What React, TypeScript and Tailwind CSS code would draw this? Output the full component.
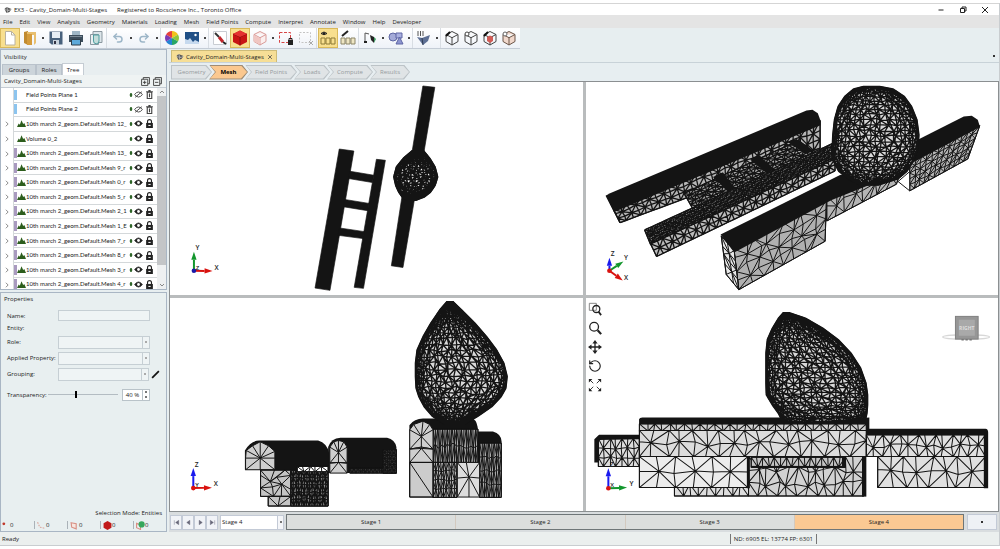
import { useState, type ReactNode } from "react";
import { RotateCcw, Undo2, Redo2 } from "lucide-react";
import clsx from "clsx";

type Point = [number, number];

/* ---------- mesh drawing ---------- */

// Small deterministic generator so the meshes look the same on every render
const createRandom = (seed: number) => {
  let s = seed;
  return () => {
    s = (s * 16807) % 2147483647;
    return s / 2147483647;
  };
};

const gridToPath = (grid: Point[][]) => {
  let d = "";
  for (let r = 0; r < grid.length; r++) {
    d += "M" + grid[r].map((p) => `${p[0].toFixed(1)} ${p[1].toFixed(1)}`).join("L");
  }
  for (let r = 0; r < grid.length - 1; r++) {
    for (let c = 0; c < grid[r].length; c++) {
      const a = grid[r][c];
      const b = grid[r + 1][c];
      d += `M${a[0].toFixed(1)} ${a[1].toFixed(1)}L${b[0].toFixed(1)} ${b[1].toFixed(1)}`;
      if (c < grid[r].length - 1) {
        const flip = (r + c) % 2 === 0;
        const p = flip ? a : grid[r][c + 1];
        const q = flip ? grid[r + 1][c + 1] : b;
        d += `M${p[0].toFixed(1)} ${p[1].toFixed(1)}L${q[0].toFixed(1)} ${q[1].toFixed(1)}`;
      }
    }
  }
  return d;
};

interface PatchProps {
  corners: [Point, Point, Point, Point];
  cols: number;
  rows: number;
  fill?: string;
  weight?: number;
  jitter?: number;
}

// Four-sided face split into triangles. Corners run clockwise from top left.
const Patch = ({ corners, cols, rows, fill = "#d4d4d4", weight = 3, jitter = 0.3 }: PatchProps) => {
  const [a, b, c, d] = corners;
  const rnd = createRandom(Math.round(a[0] * 7 + a[1] * 13 + cols * 31 + rows));
  const grid: Point[][] = [];
  for (let r = 0; r <= rows; r++) {
    const line: Point[] = [];
    for (let k = 0; k <= cols; k++) {
      const du = (rnd() - 0.5) * jitter;
      const dv = (rnd() - 0.5) * jitter;
      const u = k === 0 || k === cols ? k / cols : (k + du) / cols;
      const v = r === 0 || r === rows ? r / rows : (r + dv) / rows;
      line.push([
        (a[0] * (1 - u) + b[0] * u) * (1 - v) + (d[0] * (1 - u) + c[0] * u) * v,
        (a[1] * (1 - u) + b[1] * u) * (1 - v) + (d[1] * (1 - u) + c[1] * u) * v,
      ]);
    }
    grid.push(line);
  }
  return (
    <g strokeLinejoin="round">
      <polygon points={corners.join(" ")} fill={fill} stroke="#141414" strokeWidth={3} />
      <path d={gridToPath(grid)} fill="none" stroke="#141414" strokeWidth={weight} />
    </g>
  );
};

const box = (x1: number, y1: number, x2: number, y2: number): [Point, Point, Point, Point] => [
  [x1, y1],
  [x2, y1],
  [x2, y2],
  [x1, y2],
];

interface CavityProps {
  // y, left edge, right edge
  profile: [number, number, number][];
  cols: number;
  rows: number;
  weight?: number;
  fill?: string;
}

const Cavity = ({ profile, cols, rows, weight = 3, fill = "#d9d9d9" }: CavityProps) => {
  const rnd = createRandom(profile[0][0] * 17 + cols);
  const top = profile[0][0];
  const bottom = profile[profile.length - 1][0];
  const edgesAt = (y: number) => {
    const i = Math.max(1, profile.findIndex((p) => p[0] >= y));
    const [y0, l0, r0] = profile[i - 1];
    const [y1, l1, r1] = profile[i];
    const t = (y - y0) / (y1 - y0);
    return [l0 + (l1 - l0) * t, r0 + (r1 - r0) * t];
  };
  const grid: Point[][] = [];
  for (let r = 0; r <= rows; r++) {
    const v = (1 - Math.cos((Math.PI * r) / rows)) / 2;
    const base = top + (bottom - top) * (v * 0.6 + (r / rows) * 0.4);
    const line: Point[] = [];
    for (let k = 0; k <= cols; k++) {
      const inner = k > 0 && k < cols && r > 0 && r < rows;
      const y = inner ? base + (rnd() - 0.5) * ((bottom - top) / rows) * 0.6 : base;
      const [l, rgt] = edgesAt(y);
      const kk = inner ? k + (rnd() - 0.5) * 0.8 : k;
      const x = (l + rgt) / 2 + ((rgt - l) / 2) * Math.sin((kk / cols - 0.5) * Math.PI);
      line.push([x, y]);
    }
    grid.push(line);
  }
  const outline = [
    ...profile.map(([y, l]) => `${l},${y}`),
    ...[...profile].reverse().map(([y, , r]) => `${r},${y}`),
  ].join(" ");
  return (
    <g strokeLinejoin="round">
      <polygon points={outline} fill={fill} stroke="#141414" strokeWidth={6} />
      <path d={gridToPath(grid)} fill="none" stroke="#141414" strokeWidth={weight} />
    </g>
  );
};

// Arched face with edges running out from one point
const Fan = ({ points, center, fill = "#cfcfcf" }: { points: Point[]; center: Point; fill?: string }) => (
  <g stroke="#141414" strokeWidth={3} strokeLinejoin="round">
    <polygon points={points.join(" ")} fill={fill} />
    <path d={points.map((p) => `M${center.join(" ")}L${p.join(" ")}`).join("")} />
  </g>
);

interface Axis {
  label: string;
  color: string;
  tip: Point;
  text: Point;
}

const Triad = ({ axes, hub, third }: { axes: Axis[]; hub: string; third?: string }) => (
  <g>
    {axes.map(({ label, color, tip, text }) => {
      const [dx, dy] = [tip[0] - 70, tip[1] - 575];
      const len = Math.hypot(dx, dy);
      const [ux, uy] = [dx / len, dy / len];
      const bx = tip[0] - ux * 24;
      const by = tip[1] - uy * 24;
      return (
        <g key={label}>
          <line x1={70} y1={575} x2={bx} y2={by} stroke={color} strokeWidth={6} />
          <polygon
            fill={color}
            points={`${tip[0]},${tip[1]} ${bx - uy * 8},${by + ux * 8} ${bx + uy * 8},${by - ux * 8}`}
          />
          <text x={text[0]} y={text[1]} fontSize={20} fontWeight={600} fill="#222" textAnchor="middle">
            {label}
          </text>
        </g>
      );
    })}
    <circle cx={70} cy={575} r={7} fill={hub} />
    {third && (
      <text x={81} y={572} fontSize={18} fontWeight={600} fill="#222" textAnchor="middle">
        {third}
      </text>
    )}
  </g>
);

const RED = "#d9120f";
const GREEN = "#12962c";
const BLUE = "#1a1aee";

const TopView = () => (
  <svg viewBox="0 6 1239 642" className="block h-full w-full" role="img" aria-label="Top view">
    <g fill="#141414" stroke="#141414" strokeWidth={2} strokeLinejoin="round">
      <polygon points="508,208 552,214 480,634 435,627" />
      <polygon points="620,239 647,242 581,628 553,625" />
      <polygon points="540,275 612,287 608,309 536,297" />
      <polygon points="524,360 598,372 594,394 520,382" />
      <polygon points="509,446 584,457 580,478 504,468" />
      <polygon points="760,18 796,22 762,225 727,219" />
      <polygon points="698,345 736,352 700,565 665,560" />
    </g>
    <Cavity
      fill="#fff"
      profile={[
        [214, 728, 762],
        [236, 702, 780],
        [262, 681, 796],
        [292, 673, 804],
        [318, 679, 796],
        [338, 688, 782],
        [352, 698, 764],
        [362, 712, 738],
      ]}
      cols={16}
      rows={16}
      weight={5}
    />
    <Triad
      hub="#1a1aa8"
      third="Z"
      axes={[
        { label: "Y", color: GREEN, tip: [70, 518], text: [81, 513] },
        { label: "X", color: RED, tip: [126, 576], text: [138, 573] },
      ]}
    />
  </svg>
);

const PerspectiveView = () => (
  <svg viewBox="3 6 1236 642" className="block h-full w-full" role="img" aria-label="Perspective view">
    <Patch corners={[[82, 390], [705, 122], [705, 205], [102, 430]]} cols={30} rows={3} fill="#b5b5b5" weight={4} />
    <polygon
      points="60,348 70,342 664,92 682,90 698,100 706,122 706,136 84,398"
      fill="#141414"
    />
    <polygon points="60,348 84,394 102,430" fill="#9a9a9a" stroke="#141414" strokeWidth={4} />
    <Patch corners={[[295, 342], [640, 182], [690, 222], [320, 386]]} cols={24} rows={5} fill="#aaa" weight={4} />
    <polygon points="382,292 412,278 448,326 428,336" fill="#141414" />
    <polygon points="494,240 520,226 566,268 546,282" fill="#141414" />
    <polygon points="606,186 634,178 684,212 660,222" fill="#141414" />
    <Patch corners={[[176, 452], [750, 188], [750, 240], [194, 496]]} cols={54} rows={6} fill="#aaa" weight={4} />
    <Patch corners={[[194, 494], [750, 238], [750, 274], [212, 532]]} cols={30} rows={2} fill="#bbb" weight={4} />

    <Patch corners={[[725, 350], [960, 240], [935, 314], [725, 425]]} cols={8} rows={2} fill="#b5b5b5" jitter={0.5} />
    <Patch corners={[[445, 510], [724, 362], [720, 486], [460, 632]]} cols={8} rows={4} fill="#b0b0b0" jitter={0.7} />
    <Patch corners={[[407, 470], [446, 514], [460, 632], [422, 586]]} cols={2} rows={4} fill="#e8e8e8" />
    <polygon points="405,466 765,286 960,240 955,276 740,362 720,372 446,520" fill="#141414" />
    <Patch corners={[[975, 248], [1186, 138], [1150, 238], [975, 334]]} cols={12} rows={5} fill="#b5b5b5" />
    <polygon points="940,306 975,276 975,334" fill="#fff" stroke="#141414" strokeWidth={3} />
    <polygon points="980,190 1138,110 1162,108 1180,120 1187,142 975,254" fill="#141414" />
    <Cavity
      profile={[
        [20, 836, 884],
        [28, 806, 925],
        [50, 780, 958],
        [80, 760, 980],
        [120, 749, 996],
        [165, 744, 1002],
        [210, 742, 999],
        [245, 746, 985],
        [275, 762, 966],
        [297, 790, 940],
        [316, 826, 880],
      ]}
      cols={24}
      rows={24}
      weight={4}
    />
    <Triad
      hub={RED}
      axes={[
        { label: "Z", color: BLUE, tip: [70, 536], text: [80, 530] },
        { label: "Y", color: GREEN, tip: [112, 547], text: [120, 544] },
        { label: "X", color: RED, tip: [110, 604], text: [120, 602] },
      ]}
    />
  </svg>
);

const FrontView = () => (
  <svg viewBox="0 6 1239 636" className="block h-full w-full" role="img" aria-label="Front view">
    <path d="M225 520V462Q242 433 268 432H445Q472 440 478 470V530H316V520Z" fill="#141414" />
    <path d="M475 530V452Q484 425 512 424H652Q676 430 680 452V530Z" fill="#141414" />
    <Patch corners={box(540, 516, 680, 530)} cols={22} rows={1} fill="#444" />
    <Patch corners={box(640, 460, 680, 530)} cols={6} rows={8} fill="#444" />
    <Fan
      center={[271, 485]}
      points={[[227, 520], [227, 485], [229, 462], [248, 448], [271, 436], [296, 448], [315, 465], [315, 485], [315, 520], [271, 520]]}
    />
    <Fan
      center={[506, 468]}
      points={[[480, 500], [480, 452], [492, 436], [506, 432], [522, 436], [532, 452], [532, 500], [506, 498]]}
    />
    <Fan center={[506, 498]} points={[[480, 500], [506, 498], [532, 500], [532, 530], [480, 530]]} />
    <Patch corners={box(272, 521, 363, 600)} cols={3} rows={3} fill="#c4c4c4" jitter={0.9} />
    <Patch corners={box(295, 600, 363, 629)} cols={2} rows={1} fill="#c4c4c4" />
    <Patch corners={box(363, 522, 475, 629)} cols={14} rows={5} fill="#8f8f8f" weight={4} />
    <Patch corners={box(382, 510, 475, 526)} cols={5} rows={1} fill="#fff" />

    <path d="M719 602V386Q734 366 760 366H910Q925 376 925 405H970Q995 412 996 435V602Z" fill="#141414" />
    <Patch corners={box(790, 398, 925, 498)} cols={19} rows={2} fill="#aaa" />
    <Patch corners={box(790, 498, 862, 603)} cols={9} rows={4} fill="#b5b5b5" />
    <Patch corners={box(930, 440, 995, 603)} cols={9} rows={4} fill="#aaa" />
    <Fan
      center={[755, 420]}
      points={[[720, 458], [720, 400], [732, 384], [760, 374], [780, 384], [790, 400], [790, 458], [755, 452]]}
    />
    <Fan center={[755, 456]} points={[[720, 458], [755, 452], [790, 458], [790, 498], [720, 498]]} />
    <Patch corners={box(720, 498, 790, 602)} cols={1} rows={1} fill="#ccc" />
    <Fan
      center={[898, 542]}
      fill="#ddd"
      points={[[863, 498], [890, 498], [930, 498], [930, 545], [930, 602], [898, 602], [863, 602], [863, 545]]}
    />
    <Cavity
      profile={[
        [16, 832, 850],
        [40, 811, 875],
        [80, 784, 915],
        [120, 761, 950],
        [160, 743, 980],
        [200, 738, 1002],
        [240, 738, 1012],
        [275, 740, 1008],
        [300, 748, 994],
        [330, 764, 966],
        [358, 788, 925],
        [382, 824, 885],
      ]}
      cols={26}
      rows={26}
      weight={4}
    />
    <Triad
      hub={RED}
      third="Y"
      axes={[
        { label: "Z", color: BLUE, tip: [70, 515], text: [80, 511] },
        { label: "X", color: RED, tip: [126, 574], text: [138, 569] },
      ]}
    />
  </svg>
);

const RightView = () => (
  <svg viewBox="3 6 1236 636" className="block h-full w-full" role="img" aria-label="Right view">
    <Patch corners={box(40, 426, 163, 510)} cols={7} rows={3} fill="#ddd" />
    <polygon points="28,428 42,415 163,415 163,428 42,430 42,498 28,498" fill="#141414" />
    <Patch corners={box(268, 562, 490, 598)} cols={9} rows={1} fill="#ddd" />
    <Patch corners={box(490, 480, 835, 598)} cols={12} rows={3} fill="#d2d2d2" jitter={0.6} />
    <Patch corners={box(498, 482, 780, 512)} cols={16} rows={1} fill="#c4c4c4" />
    <rect x={498} y={508} width={284} height={5} fill="#141414" />
    <rect x={770} y={480} width={12} height={32} fill="#141414" />
    <rect x={830} y={480} width={13} height={120} fill="#141414" />
    <Patch corners={box(163, 480, 488, 573)} cols={6} rows={2} fill="#ececec" jitter={0.2} />
    <rect x={485} y={480} width={9} height={95} fill="#141414" />
    <Patch corners={box(163, 382, 843, 404)} cols={30} rows={1} fill="#cfcfcf" />
    <Patch corners={box(163, 402, 843, 480)} cols={17} rows={2} fill="#dcdcdc" jitter={0.5} />
    <Patch corners={box(843, 415, 1200, 480)} cols={14} rows={2} fill="#e0e0e0" jitter={0.5} />
    <Patch corners={box(877, 480, 1200, 573)} cols={8} rows={2} fill="#e0e0e0" jitter={0.5} />
    <Cavity
      profile={[
        [50, 594, 612],
        [66, 580, 660],
        [96, 562, 712],
        [130, 547, 758],
        [170, 543, 796],
        [215, 543, 825],
        [260, 543, 841],
        [295, 544, 846],
        [325, 562, 846],
        [350, 580, 844],
        [378, 594, 838],
      ]}
      cols={26}
      rows={28}
      weight={4}
    />
    <path d="M162 368Q163 363 172 363H590L610 378L700 374L852 363V402H843V383H162Z" fill="#141414" />
    <path d="M843 397H1200Q1208 398 1208 408V575H1195V416H843Z" fill="#141414" />
    <g>
      <ellipse cx={1142} cy={122} rx={70} ry={7} fill="none" stroke="#d8d8d8" strokeWidth={4} />
      <rect x={1110} y={60} width={68} height={68} fill="#969696" stroke="#808080" strokeWidth={3} />
      <rect x={1120} y={70} width={48} height={48} fill="#a9a9a9" />
      <text x={1144} y={100} fontSize={15} fontWeight={700} fill="#dedede" textAnchor="middle">
        RIGHT
      </text>
      <path d="M1128 130h32" stroke="#777" strokeWidth={5} strokeDasharray="7 5" />
    </g>
    <Triad
      hub={RED}
      third="X"
      axes={[
        { label: "Z", color: BLUE, tip: [70, 515], text: [80, 511] },
        { label: "Y", color: GREEN, tip: [126, 573], text: [139, 567] },
      ]}
    />
  </svg>
);

/* ---------- icons ---------- */

const Icon = ({ children, className = "size-4" }: { children: ReactNode; className?: string }) => (
  <svg viewBox="0 0 16 16" fill="none" className={className} aria-hidden="true">
    {children}
  </svg>
);

const AppIcon = () => (
  <Icon className="size-2 shrink-0">
    <path d="M1 6l4-4 10 4-4 6-6 2z" fill="#555" />
    <path d="M1 7l9 2 5-3M5 2l3 6-2 6" stroke="#eee" />
  </Icon>
);

const Cube = ({ color = "#444", fill = "none" }: { color?: string; fill?: string }) => (
  <path
    d="M8 1.500l6 3v7l-6 3.500-6-3.500v-7zM2 4.500l6 3.200 6-3.200M8 7.700V15"
    stroke={color}
    fill={fill}
    strokeLinejoin="round"
  />
);

const icons = {
  new: (
    <Icon>
      <path d="M3.500 1.500h6l3.500 3.500v10h-9.500z" fill="#fff" stroke="#b9b2a0" />
      <path d="M9.500 1.500V5H13" stroke="#b9b2a0" />
    </Icon>
  ),
  open: (
    <Icon>
      <path d="M2 2l4-1v14l-4-2z" fill="#c08a30" />
      <path d="M5 2h9v11l-2 2V5H5z" fill="#e8bf70" />
      <path d="M5 4h5v11H5z" fill="#d49b3c" />
    </Icon>
  ),
  save: (
    <Icon>
      <path d="M1.500 1.500h13v13h-11l-2-2z" fill="#48617c" />
      <path d="M4 2h8v6H4z" fill="#e6edf4" />
      <path d="M5 10h6v5H5z" fill="#c8d2dc" />
      <path d="M6 11h2v3H6z" fill="#334" />
    </Icon>
  ),
  print: (
    <Icon>
      <path d="M4 1h8v5H4z" fill="#9fb6c6" />
      <path d="M1 5h14v7H1z" fill="#3c4d5c" />
      <path d="M3.500 9.500h9v5.500h-9z" fill="#5da9da" stroke="#2f3d49" />
      <path d="M2 6.500h12" stroke="#7c8b97" />
    </Icon>
  ),
  copy: (
    <Icon>
      <path d="M5 1.500h9v11H5z" fill="#dce5ea" stroke="#8a979f" />
      <path d="M2.500 4.500h8v10h-8z" fill="#e9eff2" stroke="#8a979f" />
      <path d="M5.500 5h5.500v6a2.500 2.500 0 01-5.500 0z" fill="#c4dcda" stroke="#4f9ea0" />
    </Icon>
  ),
  undo: <Undo2 className="size-3 text-[#9db6c8]" strokeWidth={3} />,
  redo: <Redo2 className="size-3 text-[#9db6c8]" strokeWidth={3} />,
  wheel: (
    <Icon>
      <path d="M8 8V1a7 7 0 016 3.500z" fill="#f2c21b" />
      <path d="M8 8l6-3.500a7 7 0 010 7z" fill="#8ec63a" />
      <path d="M8 8l6 3.500A7 7 0 018 15z" fill="#27a567" />
      <path d="M8 8v7a7 7 0 01-6-3.500z" fill="#2483d4" />
      <path d="M8 8l-6 3.500a7 7 0 010-7z" fill="#7a3bb4" />
      <path d="M8 8L2 4.500A7 7 0 018 1z" fill="#e6413c" />
    </Icon>
  ),
  picture: (
    <Icon>
      <path d="M1 2h14v12H1z" fill="#1f4f86" />
      <path d="M1 14V9l3 1 2-2 3 4 2-2 4 2v2z" fill="#c6d9ee" />
      <circle cx="11.500" cy="5" r="1.200" fill="#fff" />
    </Icon>
  ),
  pen: (
    <Icon>
      <path d="M1.500 1.500h13v13h-13z" fill="#fff" stroke="#c8ccd2" />
      <path d="M3 3l4 4" stroke="#333" strokeWidth="2" />
      <path d="M7 7l4 5" stroke="#c1272d" strokeWidth="3" />
      <path d="M11 12l3 2" stroke="#222" strokeWidth="2" />
    </Icon>
  ),
  solid: (
    <Icon>
      <path d="M8 .5l7 3.500v8l-7 3.500L1 12V4z" fill="#c81414" />
      <path d="M1 4l7 3 7-3M8 7v8.500" stroke="#8c0d0d" />
      <path d="M8 .5L15 4 8 7 1 4z" fill="#e43131" />
    </Icon>
  ),
  wire: (
    <Icon>
      <Cube color="#d99a97" fill="#fbefee" />
      <path d="M2 5l6 3v6.500l-6-3z" fill="#f0c6c2" />
    </Icon>
  ),
  lockSelection: (
    <Icon>
      <path d="M1.500 2.500h11v10h-11z" stroke="#d64545" strokeDasharray="3 1.500" />
      <path d="M10 10h5v5h-5z" fill="#222" />
      <path d="M11 10V8.500h3V10" stroke="#222" />
    </Icon>
  ),
  clearSelection: (
    <Icon>
      <path d="M1.500 2.500h11v10h-11z" stroke="#c4c4c4" strokeDasharray="2 1.500" />
      <path d="M11 11l4 4M15 11l-4 4" stroke="#aaa" />
    </Icon>
  ),
  eyeGrid: (
    <Icon>
      <path d="M1 3.500Q4 .5 7 3.500 4 6 1 3.500z" stroke="#222" />
      <circle cx="4" cy="3.400" r="1.200" fill="#222" />
      <path d="M1 8h4v6H1zM6 8h4v6H6zM11 8h4v6h-4z" stroke="#8d7a36" />
    </Icon>
  ),
  editGrid: (
    <Icon>
      <path d="M2 6l6-5" stroke="#222" strokeWidth="2" />
      <path d="M1 8h4v6H1zM6 8h4v6H6zM11 8h4v6h-4z" stroke="#8d8668" fill="#eee6c4" />
    </Icon>
  ),
  section: (
    <Icon>
      <path d="M3 12V3l4 1" stroke="#555" />
      <path d="M2 12h3" stroke="#222" strokeWidth="2" />
      <path d="M8 5l4 2v6l-3-3z" fill="#222" />
      <path d="M12 7l2 2-2 4z" fill="#3f9b61" />
    </Icon>
  ),
  shapes: (
    <Icon>
      <circle cx="5" cy="7" r="4" fill="#a3aad8" stroke="#5e66a4" />
      <path d="M8 3h6v5H8z" fill="#a8afe0" stroke="#5e66a4" />
      <path d="M8 14l3.500-7L15 14z" fill="#8d95d0" stroke="#5e66a4" />
    </Icon>
  ),
  load: (
    <Icon>
      <path d="M2 1v5M4.500 1v5M7 1v5" stroke="#555" />
      <path d="M1 7l5 1 8-3-2 6-5 4z" fill="#5d6f94" />
      <path d="M6 8l1 7" stroke="#2f3c55" />
    </Icon>
  ),
  box1: (
    <Icon>
      <Cube />
      <path d="M2 6l4-4" stroke="#111" strokeWidth="2" />
    </Icon>
  ),
  box2: (
    <Icon>
      <Cube />
      <circle cx="4" cy="4" r="2" fill="#fff" stroke="#444" />
    </Icon>
  ),
  box3: (
    <Icon>
      <Cube />
      <path d="M5 7l3-1.500L11 7v4l-3 2-3-2z" fill="#d25c56" />
      <path d="M2 6l4-4" stroke="#111" strokeWidth="2" />
    </Icon>
  ),
  box4: (
    <Icon>
      <Cube color="#6b5548" fill="#f1d8cc" />
      <circle cx="4" cy="4" r="2" fill="#fff" stroke="#666" />
    </Icon>
  ),
};

type IconName = keyof typeof icons;

interface ToolItem {
  icon: IconName;
  label: string;
  menu?: boolean;
  active?: boolean;
  divider?: boolean;
  narrow?: boolean;
}

const tools: ToolItem[] = [
  { icon: "new", label: "New", active: true },
  { icon: "open", label: "Open", menu: true },
  { icon: "save", label: "Save" },
  { icon: "print", label: "Print" },
  { icon: "copy", label: "Copy", divider: true },
  { icon: "undo", label: "Undo", menu: true },
  { icon: "redo", label: "Redo", menu: true, divider: true },
  { icon: "wheel", label: "Display options" },
  { icon: "picture", label: "Background", menu: true, divider: true },
  { icon: "pen", label: "Edit materials" },
  { icon: "solid", label: "Solid faces", active: true },
  { icon: "wire", label: "Transparent faces", menu: true },
  { icon: "lockSelection", label: "Lock selection" },
  { icon: "clearSelection", label: "Clear selection", divider: true },
  { icon: "eyeGrid", label: "Show mesh", active: true },
  { icon: "editGrid", label: "Edit mesh", divider: true },
  { icon: "section", label: "Section", menu: true },
  { icon: "shapes", label: "Primitives", menu: true, divider: true },
  { icon: "load", label: "Loads", menu: true, divider: true },
  { icon: "box1", label: "Edge box", narrow: true },
  { icon: "box2", label: "Vertex box", narrow: true },
  { icon: "box3", label: "Inner box", narrow: true },
  { icon: "box4", label: "Outer box", narrow: true },
];

const menus = [
  "File", "Edit", "View", "Analysis", "Geometry", "Materials", "Loading", "Mesh",
  "Field Points", "Compute", "Interpret", "Annotate", "Window", "Help", "Developer",
];

/* ---------- top bars ---------- */

const TitleBar = () => (
  <header className="flex h-3 items-center border-t border-[#d5d5d5] bg-white px-1">
    <AppIcon />
    <span className="ml-[2px]">EX3 - Cavity_Domain-Multi-Stages</span>
    <span className="ml-[10px]">Registered to Rocscience Inc., Toronto Office</span>
    <div className="ml-auto flex gap-[14px] pr-[6px]">
      <button aria-label="Minimize">
        <Icon className="size-2">
          <path d="M3 8h10" stroke="#222" strokeWidth="2" />
        </Icon>
      </button>
      <button aria-label="Restore">
        <Icon className="size-2">
          <path d="M3 5h8v8H3zM6 5V2h8v8h-3" stroke="#222" strokeWidth="2" />
        </Icon>
      </button>
      <button aria-label="Close">
        <Icon className="size-2">
          <path d="M2 2l12 12M14 2L2 14" stroke="#222" strokeWidth="2" />
        </Icon>
      </button>
    </div>
  </header>
);

const Caret = ({ label }: { label: string }) => (
  <button aria-label={label} className="flex h-full w-[6px] items-center justify-center">
    <span className="size-[2px] bg-[#444]" />
  </button>
);

const Toolbar = () => (
  <div className="flex h-[21px] items-center self-start border-b border-[#c4ccd6] bg-linear-to-b from-white to-[#eef2f8] pr-[2px]">
    {tools.map(({ icon, label, menu, active, divider, narrow }) => (
      <div key={icon} className={clsx("flex h-full items-center", divider && "mr-px border-r border-[#d8dde3]")}>
        <button
          aria-label={label}
          className={clsx(
            "flex h-5 items-center justify-center border",
            narrow ? "w-[19px]" : "w-5",
            active ? "border-[#d9b95a] bg-[#f8df8e]" : "border-transparent",
          )}
        >
          {icons[icon]}
        </button>
        {menu && <Caret label={`${label} menu`} />}
      </div>
    ))}
  </div>
);

/* ---------- left panel ---------- */

interface TreeNode {
  name: string;
  kind: "plane" | "volume" | "mesh";
}

const treeNodes: TreeNode[] = [
  { name: "Field Points Plane 1", kind: "plane" },
  { name: "Field Points Plane 2", kind: "plane" },
  { name: "10th march 2_geom.Default.Mesh 12_", kind: "volume" },
  { name: "Volume 0_2", kind: "volume" },
  { name: "10th march 2_geom.Default.Mesh 13_", kind: "mesh" },
  { name: "10th march 2_geom.Default.Mesh 9_r", kind: "mesh" },
  { name: "10th march 2_geom.Default.Mesh 0_r", kind: "mesh" },
  { name: "10th march 2_geom.Default.Mesh 5_r", kind: "mesh" },
  { name: "10th march 2_geom.Default.Mesh 2_1", kind: "mesh" },
  { name: "10th march 2_geom.Default.Mesh 1_E", kind: "mesh" },
  { name: "10th march 2_geom.Default.Mesh 7_r", kind: "mesh" },
  { name: "10th march 2_geom.Default.Mesh 8_r", kind: "mesh" },
  { name: "10th march 2_geom.Default.Mesh 3_r", kind: "mesh" },
  { name: "10th march 2_geom.Default.Mesh 4_r", kind: "mesh" },
];

const TreeRow = ({ name, kind }: TreeNode) => {
  const plane = kind === "plane";
  return (
    <li className="flex flex-1 items-center">
      <span className="flex w-3 justify-center">
        {!plane && (
          <button aria-label={`Expand ${name}`}>
            <Icon className="size-[6px]">
              <path d="M5 2l6 6-6 6" stroke="#666" strokeWidth="2" />
            </Icon>
          </button>
        )}
      </span>
      <div className="flex h-full min-w-0 flex-1 items-center border-b border-l border-[#d4d8da]">
        <span
          className={clsx(
            "h-[10px] w-[3px] shrink-0",
            plane && "bg-[#8cc4ee]",
            kind === "mesh" && "bg-[#a99abf]",
          )}
        />
        <span className="w-[9px] shrink-0">
          {!plane && (
            <Icon className="size-[9px]">
              <path d="M0 14l3-6 2 2 3-8 3 7 2-2 3 7z" fill="#2c5d1c" />
            </Icon>
          )}
        </span>
        <span className="shrink-0 font-['Lato','Noto_Sans',sans-serif] whitespace-nowrap">{name}</span>
        <div className="ml-auto flex shrink-0 items-center pr-[3px]">
          <Icon className="h-2 w-1">
            <path d="M5 0h6v5h2v6h-2v5H5v-5H3V5h2z" fill="#225c1c" />
          </Icon>
          <button aria-label={`Visibility of ${name}`} className="ml-px">
            <Icon className="size-[9px]">
              <path d="M1 8q7-9 14 0-7 9-14 0z" fill={plane ? "none" : "#222"} stroke="#333" strokeWidth="1.500" />
              {plane ? (
                <path d="M2 13L14 3" stroke="#333" strokeWidth="1.500" />
              ) : (
                <circle cx="8" cy="8" r="2.500" fill="#fff" />
              )}
            </Icon>
          </button>
          <button aria-label={plane ? `Delete ${name}` : `Lock ${name}`} className="ml-[2px]">
            <Icon className="size-[9px]">
              {plane ? (
                <path d="M4 4h8v11H4zM2 3h12M6 1h4M8 6v7" stroke="#444" strokeWidth="2" />
              ) : (
                <>
                  <path d="M2 7h12v9H2z" fill="#222" />
                  <path d="M4.500 7V4.500a3.500 3.500 0 017 0V7" stroke="#222" strokeWidth="2" />
                  <path d="M6 11.500h4" stroke="#eee" strokeWidth="2" />
                </>
              )}
            </Icon>
          </button>
        </div>
      </div>
    </li>
  );
};

const VisibilityPanel = () => {
  const [tab, setTab] = useState("Tree");
  return (
    <section className="border border-[#a9b6c4] bg-[#e8eef0]">
      <h2 className="flex h-[13px] items-center px-[3px]">Visibility</h2>
      <div className="flex h-3 items-end pl-px" role="tablist">
        {["Groups", "Roles", "Tree"].map((name) => (
          <button
            key={name}
            role="tab"
            aria-selected={tab === name}
            onClick={() => setTab(name)}
            className={clsx(
              "border border-b-0",
              name === "Groups" && "w-[34px]",
              name === "Roles" && "w-[26px]",
              name === "Tree" && "w-[22px]",
              tab === name ? "h-3 border-[#c5ccd3] bg-white" : "h-[11px] border-[#b9c2cb] bg-[#ccd4da]",
            )}
          >
            {name}
          </button>
        ))}
      </div>
      <div className="flex h-[13px] items-center border-b border-[#c5ccd3] bg-[#eff3f3] pr-1 pl-[3px]">
        <span>Cavity_Domain-Multi-Stages</span>
        <div className="ml-auto flex gap-[3px]">
          {["Expand all", "Collapse all"].map((label, i) => (
            <button key={label} aria-label={label}>
              <Icon className="size-[9px]">
                <path d="M1 4h11v11H1zM4 4V1h11v11h-3" stroke="#333" strokeWidth="1.500" />
                <path d={i === 0 ? "M3.500 9.500h6M6.500 6.500v6" : "M3.500 9.500h6"} stroke="#333" strokeWidth="1.500" />
              </Icon>
            </button>
          ))}
        </div>
      </div>
      <div className="flex h-[201px] overflow-hidden bg-white">
        <ul className="flex h-[204px] min-w-0 flex-1 flex-col">
          {treeNodes.map((node) => (
            <TreeRow key={node.name} {...node} />
          ))}
        </ul>
        <div className="flex w-[9px] flex-col items-center bg-[#eef0f1] text-[#888]">
          <Icon className="size-2">
            <path d="M4 10l4-4 4 4" stroke="currentColor" strokeWidth="2" />
          </Icon>
          <div className="w-full flex-1 bg-[#c3c5c7]" />
          <div className="flex h-6 items-end">
            <Icon className="size-2">
              <path d="M4 6l4 4 4-4" stroke="currentColor" strokeWidth="2" />
            </Icon>
          </div>
        </div>
      </div>
    </section>
  );
};

const FieldSelect = ({ id, label }: { id: string; label: string }) => (
  <div className="flex h-4 items-center">
    <label htmlFor={id} className="w-[51px] shrink-0 whitespace-nowrap">
      {label}
    </label>
    <div className="relative h-[13px] w-[92px]">
      <select id={id} className="block h-full w-full appearance-none border border-[#c6cfd4] bg-[#eff4f5]" />
      <span className="pointer-events-none absolute inset-y-0 right-0 flex w-2 items-center justify-center border border-[#c6cfd4]">
        <span className="size-[2px] bg-[#aaa]" />
      </span>
    </div>
    {id === "grouping" && (
      <button aria-label="Edit grouping" className="ml-[2px]">
        <Icon className="size-[9px]">
          <path d="M2 14L14 2" stroke="#111" strokeWidth="3" />
        </Icon>
      </button>
    )}
  </div>
);

const counters: { name: string; icon: ReactNode }[] = [
  { name: "vertices", icon: <circle cx="5" cy="5" r="2.500" fill="#c0392b" /> },
  { name: "edges", icon: <path d="M1 2l4 9 9 2" stroke="#dba79c" strokeWidth="2" strokeDasharray="3 2" /> },
  { name: "faces", icon: <path d="M2 3l9 2v9l-8-3z" stroke="#d99084" strokeWidth="2" fill="#f7e6df" /> },
  { name: "volumes", icon: <path d="M8 0l7 4v8l-7 4-7-4V4z" fill="#c11a1a" /> },
  {
    name: "groups",
    icon: (
      <>
        <path d="M1 4l7 3v8l-7-3z" stroke="#d99084" strokeWidth="2" />
        <circle cx="10" cy="6" r="5.500" fill="#35a75c" />
      </>
    ),
  },
];

const PropertiesPanel = () => {
  const [transparency, setTransparency] = useState(40);
  return (
    <section className="mt-[2px] flex min-h-0 flex-1 flex-col border border-[#a9b6c4] bg-[#e8eff0]">
      <h2 className="px-[3px] pt-px">Properties</h2>
      <div className="px-[6px] pt-[5px]">
        <div className="flex h-[13px] items-center">
          <label htmlFor="name" className="w-[51px]">
            Name:
          </label>
          <input id="name" className="h-[11px] w-[92px] border border-[#c6cfd4] bg-[#eff4f5]" />
        </div>
        <div className="flex h-3 items-center">Entity:</div>
        <FieldSelect id="role" label="Role:" />
        <FieldSelect id="applied" label="Applied Property:" />
        <FieldSelect id="grouping" label="Grouping:" />
        <div className="mt-[6px] flex h-[13px] items-center">
          <label htmlFor="transparency" className="w-[41px] shrink-0">
            Transparency:
          </label>
          <input
            id="transparency"
            type="range"
            min={0}
            max={100}
            value={transparency}
            onChange={(e) => setTransparency(Number(e.target.value))}
            className="h-[7px] w-[70px] appearance-none bg-transparent [&::-webkit-slider-runnable-track]:h-px [&::-webkit-slider-runnable-track]:bg-[#b3bcc2] [&::-webkit-slider-thumb]:-mt-[3px] [&::-webkit-slider-thumb]:h-[7px] [&::-webkit-slider-thumb]:w-[2px] [&::-webkit-slider-thumb]:appearance-none [&::-webkit-slider-thumb]:bg-black"
          />
          <div className="ml-[4px] flex h-3 w-[28px] border border-[#b9c3c9] bg-white">
            <input
              aria-label="Transparency value"
              value={`${transparency} %`}
              readOnly
              className="h-full min-w-0 flex-1 text-center"
            />
            <div className="flex w-[7px] flex-col border-l border-[#b9c3c9]">
              <button
                aria-label="Increase"
                onClick={() => setTransparency((v) => Math.min(100, v + 1))}
                className="flex flex-1 items-center justify-center"
              >
                <span className="size-[2px] bg-[#777]" />
              </button>
              <button
                aria-label="Decrease"
                onClick={() => setTransparency((v) => Math.max(0, v - 1))}
                className="flex flex-1 items-center justify-center"
              >
                <span className="size-[2px] bg-[#777]" />
              </button>
            </div>
          </div>
        </div>
      </div>
      <div className="mt-auto">
        <p className="pr-1 pb-px text-right">Selection Mode: Entities</p>
        <div className="flex h-3 items-center">
          {counters.map(({ name, icon }, i) => (
            <div
              key={name}
              title={name}
              className={clsx("flex h-2 w-[33px] items-center", i > 0 && "border-l border-[#aab2b8] pl-[2px]")}
            >
              <Icon className="size-[9px]">{icon}</Icon>
              <span>0</span>
            </div>
          ))}
        </div>
      </div>
    </section>
  );
};

/* ---------- workspace ---------- */

const steps = [
  { name: "Geometry", width: "w-[41px]" },
  { name: "Mesh", width: "w-[39px]" },
  { name: "Field Points", width: "w-[52px]" },
  { name: "Loads", width: "w-[36px]" },
  { name: "Compute", width: "w-[46px]" },
  { name: "Results", width: "w-[40px]" },
];

const Workflow = () => (
  <nav className="flex h-[19px] items-center border-t border-[#c8d2d8] bg-[#e7eef1] pl-[2px]">
    {steps.map(({ name, width }, i) => {
      const active = name === "Mesh";
      const shape =
        i === 0
          ? "[clip-path:polygon(0_0,calc(100%-6px)_0,100%_50%,calc(100%-6px)_100%,0_100%)]"
          : "[clip-path:polygon(0_0,calc(100%-6px)_0,100%_50%,calc(100%-6px)_100%,0_100%,6px_50%)]";
      return (
        <button
          key={name}
          className={clsx("h-[15px] p-px", width, shape, i > 0 && "-ml-[3px]", active ? "bg-[#a08c74]" : "bg-[#bcc3c7]")}
        >
          <span
            className={clsx(
              "flex h-full items-center justify-center whitespace-nowrap",
              shape,
              active ? "bg-[#fbc88f] font-bold text-black" : "bg-[#e0e4e6] text-[#959a9d]",
            )}
          >
            {name}
          </span>
        </button>
      );
    })}
  </nav>
);

const ViewTools = () => (
  <div className="absolute top-1 left-[2px] flex flex-col gap-[5px] text-[#222]">
    <button aria-label="Zoom window">
      <Icon className="size-[14px]">
        <path d="M1.500 1.500h8v8h-8z" stroke="#777" />
        <circle cx="9.500" cy="8" r="4" stroke="currentColor" strokeWidth="1.500" />
        <path d="M12 11l3 4" stroke="currentColor" strokeWidth="2" />
      </Icon>
    </button>
    <button aria-label="Zoom">
      <Icon className="size-[14px]">
        <circle cx="7" cy="6.500" r="5" stroke="currentColor" strokeWidth="1.500" />
        <path d="M11 10.500l4 4.500" stroke="currentColor" strokeWidth="2.500" />
      </Icon>
    </button>
    <button aria-label="Pan">
      <Icon className="size-[14px]">
        <path d="M8 2v12M2 8h12" stroke="currentColor" strokeWidth="1.500" />
        <path d="M8 0l3 4H5zM8 16l3-4H5zM0 8l4-3v6zM16 8l-4-3v6z" fill="currentColor" />
      </Icon>
    </button>
    <button aria-label="Rotate">
      <RotateCcw className="size-[14px]" />
    </button>
    <button aria-label="Zoom all">
      <Icon className="size-[14px]">
        <path d="M2 2l4 4M14 2l-4 4M2 14l4-4M14 14l-4-4" stroke="currentColor" />
        <path d="M1 1h4L1 5zM15 1v4l-4-4zM1 15v-4l4 4zM15 15h-4l4-4z" fill="currentColor" />
      </Icon>
    </button>
  </div>
);

const playback = [
  { label: "First stage", d: "M3 3v10M13 3v10L6 8z" },
  { label: "Previous stage", d: "M11 3v10L4 8z" },
  { label: "Next stage", d: "M5 3v10l7-5z" },
  { label: "Last stage", d: "M13 3v10M3 3v10l7-5z" },
];

const stages = ["Stage 1", "Stage 2", "Stage 3", "Stage 4"];

const StageBar = () => {
  const [stage, setStage] = useState("Stage 4");
  return (
    <div className="flex h-5 items-center bg-[#d9dddf] px-px">
      {playback.map(({ label, d }) => (
        <button
          key={label}
          aria-label={label}
          className="flex h-[15px] w-3 items-center justify-center border border-[#c3cad6] bg-[#f1f3f7]"
        >
          <Icon className="size-[7px]">
            <path d={d} fill="#667" stroke="#667" />
          </Icon>
        </button>
      ))}
      <div className="relative ml-[2px] h-[15px] w-16">
        <select
          aria-label="Stage"
          value={stage}
          onChange={(e) => setStage(e.target.value)}
          className="block h-full w-full appearance-none border border-[#c3cad6] bg-white pl-px"
        >
          {stages.map((s) => (
            <option key={s}>{s}</option>
          ))}
        </select>
        <span className="pointer-events-none absolute inset-y-0 right-0 flex w-[7px] items-center justify-center border border-[#c3cad6] bg-[#f4f5f8]">
          <span className="size-[2px] bg-[#777]" />
        </span>
      </div>
      <div className="ml-[2px] flex h-4 flex-1 border border-[#6f7678]">
        {stages.map((s) => (
          <button
            key={s}
            onClick={() => setStage(s)}
            className={clsx(
              "flex-1 border-r border-[#d3c9bf] last:border-r-0",
              s === stage ? "bg-[#fbc993]" : "bg-[#dcdedd]",
            )}
          >
            {s}
          </button>
        ))}
      </div>
      <button
        aria-label="Stage options"
        className="mr-px ml-[3px] flex h-4 w-[30px] items-center justify-center border border-[#c3cad6] bg-[#eef1f5]"
      >
        <span className="size-[2px] bg-[#333]" />
      </button>
    </div>
  );
};

const Workspace = () => (
  <main className="flex min-w-0 flex-1 flex-col">
    <div className="flex h-[13px] items-end pl-[2px]">
      <div className="flex h-3 items-center gap-[2px] border border-b-0 border-[#cdbb78] bg-[#f6de96] pr-[3px] pl-1">
        <AppIcon />
        <span>Cavity_Domain-Multi-Stages</span>
        <button aria-label="Close document" className="ml-px">
          <Icon className="size-[6px]">
            <path d="M3 3l10 10M13 3L3 13" stroke="#444" strokeWidth="2" />
          </Icon>
        </button>
      </div>
      <button aria-label="Document list" className="mr-1 mb-[5px] ml-auto size-[2px] bg-[#333]" />
    </div>
    <Workflow />
    <div className="grid min-h-0 flex-1 grid-cols-2 grid-rows-2 gap-[3px] border border-[#8b8f91] bg-[#b9bcbd]">
      <div className="min-h-0 overflow-hidden bg-white">
        <TopView />
      </div>
      <div className="min-h-0 overflow-hidden bg-white">
        <PerspectiveView />
      </div>
      <div className="min-h-0 overflow-hidden bg-white">
        <FrontView />
      </div>
      <div className="relative min-h-0 overflow-hidden bg-white">
        <RightView />
        <ViewTools />
      </div>
    </div>
    <StageBar />
  </main>
);

export default function App() {
  return (
    <div className="flex h-screen flex-col bg-white py-[3px] font-['Open_Sans','Noto_Sans',sans-serif] text-[6px] leading-[10px] text-[#222]">
      <div className="flex min-h-0 flex-1 flex-col border-r border-b border-[#c9cdd0] bg-[#e7eef0]">
        <TitleBar />
        <nav className="flex h-[13px] items-center gap-[7px] bg-[#e4e4e4] px-[3px]">
          {menus.map((menu) => (
            <button key={menu}>{menu}</button>
          ))}
        </nav>
        <Toolbar />
        <div className="flex min-h-0 flex-1">
          <aside className="mr-[2px] flex w-[167px] shrink-0 flex-col">
            <VisibilityPanel />
            <PropertiesPanel />
          </aside>
          <Workspace />
        </div>
        <footer className="flex h-[13px] items-center justify-between bg-[#ebefee] pr-[182px] pl-[2px]">
          <span>Ready</span>
          <span className="border-x border-[#777] px-[3px] whitespace-pre">ND: 6905 EL: 13774 FP: 6301</span>
        </footer>
      </div>
    </div>
  );
}
